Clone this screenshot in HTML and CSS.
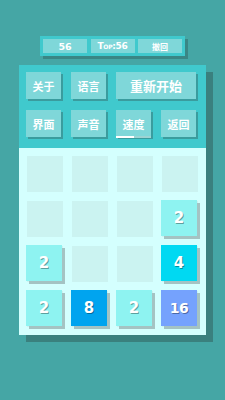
FILE: index.html
```html
<!DOCTYPE html>
<html lang="zh">
<head>
  <meta charset="UTF-8">
  <meta name="viewport" content="width=device-width, initial-scale=1">
  <title>2048</title>
  <link rel="stylesheet" href="styles.css">
</head>
<body>
  <!-- 分数栏 -->
  <div class="scorebar">
    <div class="score">56</div>
    <div class="score top">Top:56</div>
    <div class="score cn">撤回</div>
  </div>

  <div class="panel">
    <!-- 菜单按钮 -->
    <div class="menu">
      <div class="btn">关于</div>
      <div class="btn">语言</div>
      <div class="btn wide">重新开始</div>
      <div class="btn">界面</div>
      <div class="btn">声音</div>
      <div class="btn speed">速度<span class="bar"><span class="fill"></span></span></div>
      <div class="btn">返回</div>
    </div>

    <!-- 棋盘 -->
    <div class="board">
      <div class="cell"></div>
      <div class="cell"></div>
      <div class="cell"></div>
      <div class="cell"></div>

      <div class="cell"></div>
      <div class="cell"></div>
      <div class="cell"></div>
      <div class="cell"><div class="tile t2">2</div></div>

      <div class="cell"><div class="tile t2">2</div></div>
      <div class="cell"></div>
      <div class="cell"></div>
      <div class="cell"><div class="tile t4">4</div></div>

      <div class="cell"><div class="tile t2">2</div></div>
      <div class="cell"><div class="tile t8">8</div></div>
      <div class="cell"><div class="tile t2">2</div></div>
      <div class="cell"><div class="tile t16">16</div></div>
    </div>
  </div>
</body>
</html>
```

FILE: styles.css
```css
/* 基本样式 */
* {
  box-sizing: border-box;
  margin: 0;
  padding: 0;
}
body {
  background: #45a6a5;
  font-family: "Noto Sans CJK SC", "DejaVu Sans", sans-serif;
  color: #fff;
  width: 225px;
  height: 400px;
  overflow: hidden;
}

/* 分数栏 */
.scorebar {
  display: flex;
  gap: 3.5px;
  width: 145px;
  height: 20px;
  margin: 36px 0 0 40px;
  padding: 3px;
  background: #40c9cd;
  box-shadow: 3px 3px 0 #3a8685;
}
.score {
  flex: 1;
  background: #7fd7d9;
  display: flex;
  align-items: center;
  justify-content: center;
  font-family: "DejaVu Sans", sans-serif;
  font-weight: 700;
  font-size: 9.5px;
}
.score.top {
  font-variant: small-caps;
  font-size: 9px;
  letter-spacing: -0.3px;
}
.score.cn {
  font-family: "Noto Sans CJK SC", sans-serif;
  font-weight: 700;
  font-size: 8px;
}

/* 主面板 */
.panel {
  width: 187px;
  margin: 9px 0 0 19px;
  box-shadow: 7px 7px 0 #3a807e;
}
.menu {
  background: #40c9cd;
  display: grid;
  grid-template-columns: repeat(4, 35px);
  grid-auto-rows: 27px;
  column-gap: 10px;
  row-gap: 11px;
  padding: 7px 0 10px 7px;
  height: 83px;
}
.btn {
  position: relative;
  background: #7fd7d9;
  box-shadow: 2px 2px 0 #3a9c9e;
  display: flex;
  align-items: center;
  justify-content: center;
  font-size: 11px;
  font-weight: 700;
}
.btn.wide {
  grid-column: span 2;
  font-size: 13px;
}
.speed .bar {
  position: absolute;
  left: 0;
  right: 0;
  bottom: -1px;
  height: 2px;
  background: #9dd3d3;
}
.speed .fill {
  display: block;
  width: 18px;
  height: 2px;
  background: #fff;
}

/* 棋盘 */
.board {
  background: #d4fffe;
  height: 187px;
  padding: 8px;
  display: grid;
  grid-template-columns: repeat(4, 36px);
  grid-template-rows: repeat(4, 36px);
  gap: 9px;
}
.cell {
  background: #cbf3f1;
}
.tile {
  width: 36px;
  height: 36px;
  transform: translate(-1px, -1px);
  box-shadow: 3px 3px 0 #a4c3c3;
  display: flex;
  align-items: center;
  justify-content: center;
  font-family: "DejaVu Sans", sans-serif;
  font-weight: 700;
  font-size: 15px;
  text-shadow: 1px 1px 0 rgba(0, 0, 0, 0.35);
}
.t2 { background: #8ef3f1; }
.t4 { background: #00d9f2; }
.t8 { background: #00a4ef; }
.t16 { background: #75a2fd; font-size: 14px; letter-spacing: -0.5px; }
```
